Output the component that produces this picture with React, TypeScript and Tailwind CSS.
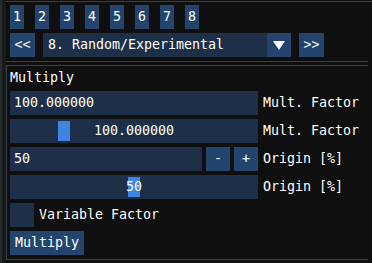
import React from 'react';

const font = "font-['DejaVu_Sans_Mono',monospace] text-[13.3px] leading-none text-white";

const Btn = ({ children, w }: { children: React.ReactNode; w: string }) => (
  <div className={`${w} h-[24px] bg-[#23456d] flex items-center justify-center`}>{children}</div>
);

const Slider = ({ frac, text }: { frac: number; text: string }) => (
  <div className="relative w-[248px] h-[24px] bg-[#1d2f49] flex items-center justify-center">
    <div
      className="absolute top-[2px] w-[12px] h-[20px] bg-[#3d85e0]"
      style={{ left: 2 + frac * 232 }}
    />
    <span className="relative">{text}</span>
  </div>
);

const Label = ({ children }: { children: React.ReactNode }) => (
  <span className="ml-[5px]">{children}</span>
);

export default function App() {
  return (
    <div className={`w-[372px] h-[263px] bg-[#0f0f0f] flex overflow-hidden ${font}`}>
      {/* left edge strip */}
      <div className="w-[2px] bg-[#2a2e2e]" />
      <div className="w-[4px] bg-[#171b1b]" />

      <div className="flex-1 flex flex-col">
        <div className="mt-[1px] h-[1px] bg-[#3e3e47]" />

        {/* page tabs */}
        <div className="mt-[3px] pl-[4px] flex gap-[11px]">
          {['1', '2', '3', '4', '5', '6', '7', '8'].map((n) => (
            <Btn key={n} w="w-[14px]">{n}</Btn>
          ))}
        </div>

        {/* category selector */}
        <div className="mt-[4px] pl-[4px] flex items-center">
          <Btn w="w-[25px]">&lt;&lt;</Btn>
          <div className="ml-[8px] w-[224px] h-[24px] bg-[#1d2f49] flex items-center pl-[5px]">
            8. Random/Experimental
          </div>
          <div className="w-[24px] h-[24px] bg-[#23456d] flex items-center justify-center">
            <svg width="12" height="9" viewBox="0 0 12 9">
              <polygon points="0,0 12,0 6,9" fill="#ffffff" />
            </svg>
          </div>
          <div className="ml-[8px]">
            <Btn w="w-[25px]">&gt;&gt;</Btn>
          </div>
        </div>

        <div className="mt-[4px] h-[1px] w-[362px] bg-[#3e3e47]" />

        {/* child panel */}
        <div className="mt-[3px] w-[362px] h-[195px] border-t border-b border-l border-[#3e3e47] pl-[3px] pt-[3px] flex flex-col gap-[4px]">
          <div className="h-[18px] flex items-center">Multiply</div>

          <div className="flex items-center">
            <div className="w-[248px] h-[24px] bg-[#1d2f49] flex items-center pl-[4px]">100.000000</div>
            <Label>Mult. Factor</Label>
          </div>

          <div className="flex items-center">
            <Slider frac={0.2} text="100.000000" />
            <Label>Mult. Factor</Label>
          </div>

          <div className="flex items-center">
            <div className="w-[192px] h-[24px] bg-[#1d2f49] flex items-center pl-[4px]">50</div>
            <div className="ml-[4px]">
              <Btn w="w-[24px]">-</Btn>
            </div>
            <div className="ml-[4px]">
              <Btn w="w-[24px]">+</Btn>
            </div>
            <Label>Origin [%]</Label>
          </div>

          <div className="flex items-center">
            <Slider frac={0.5} text="50" />
            <Label>Origin [%]</Label>
          </div>

          <div className="flex items-center">
            <div className="w-[24px] h-[24px] bg-[#1d2f49]" />
            <Label>Variable Factor</Label>
          </div>

          <div className="flex">
            <Btn w="w-[74px]">Multiply</Btn>
          </div>
        </div>
      </div>
    </div>
  );
}
